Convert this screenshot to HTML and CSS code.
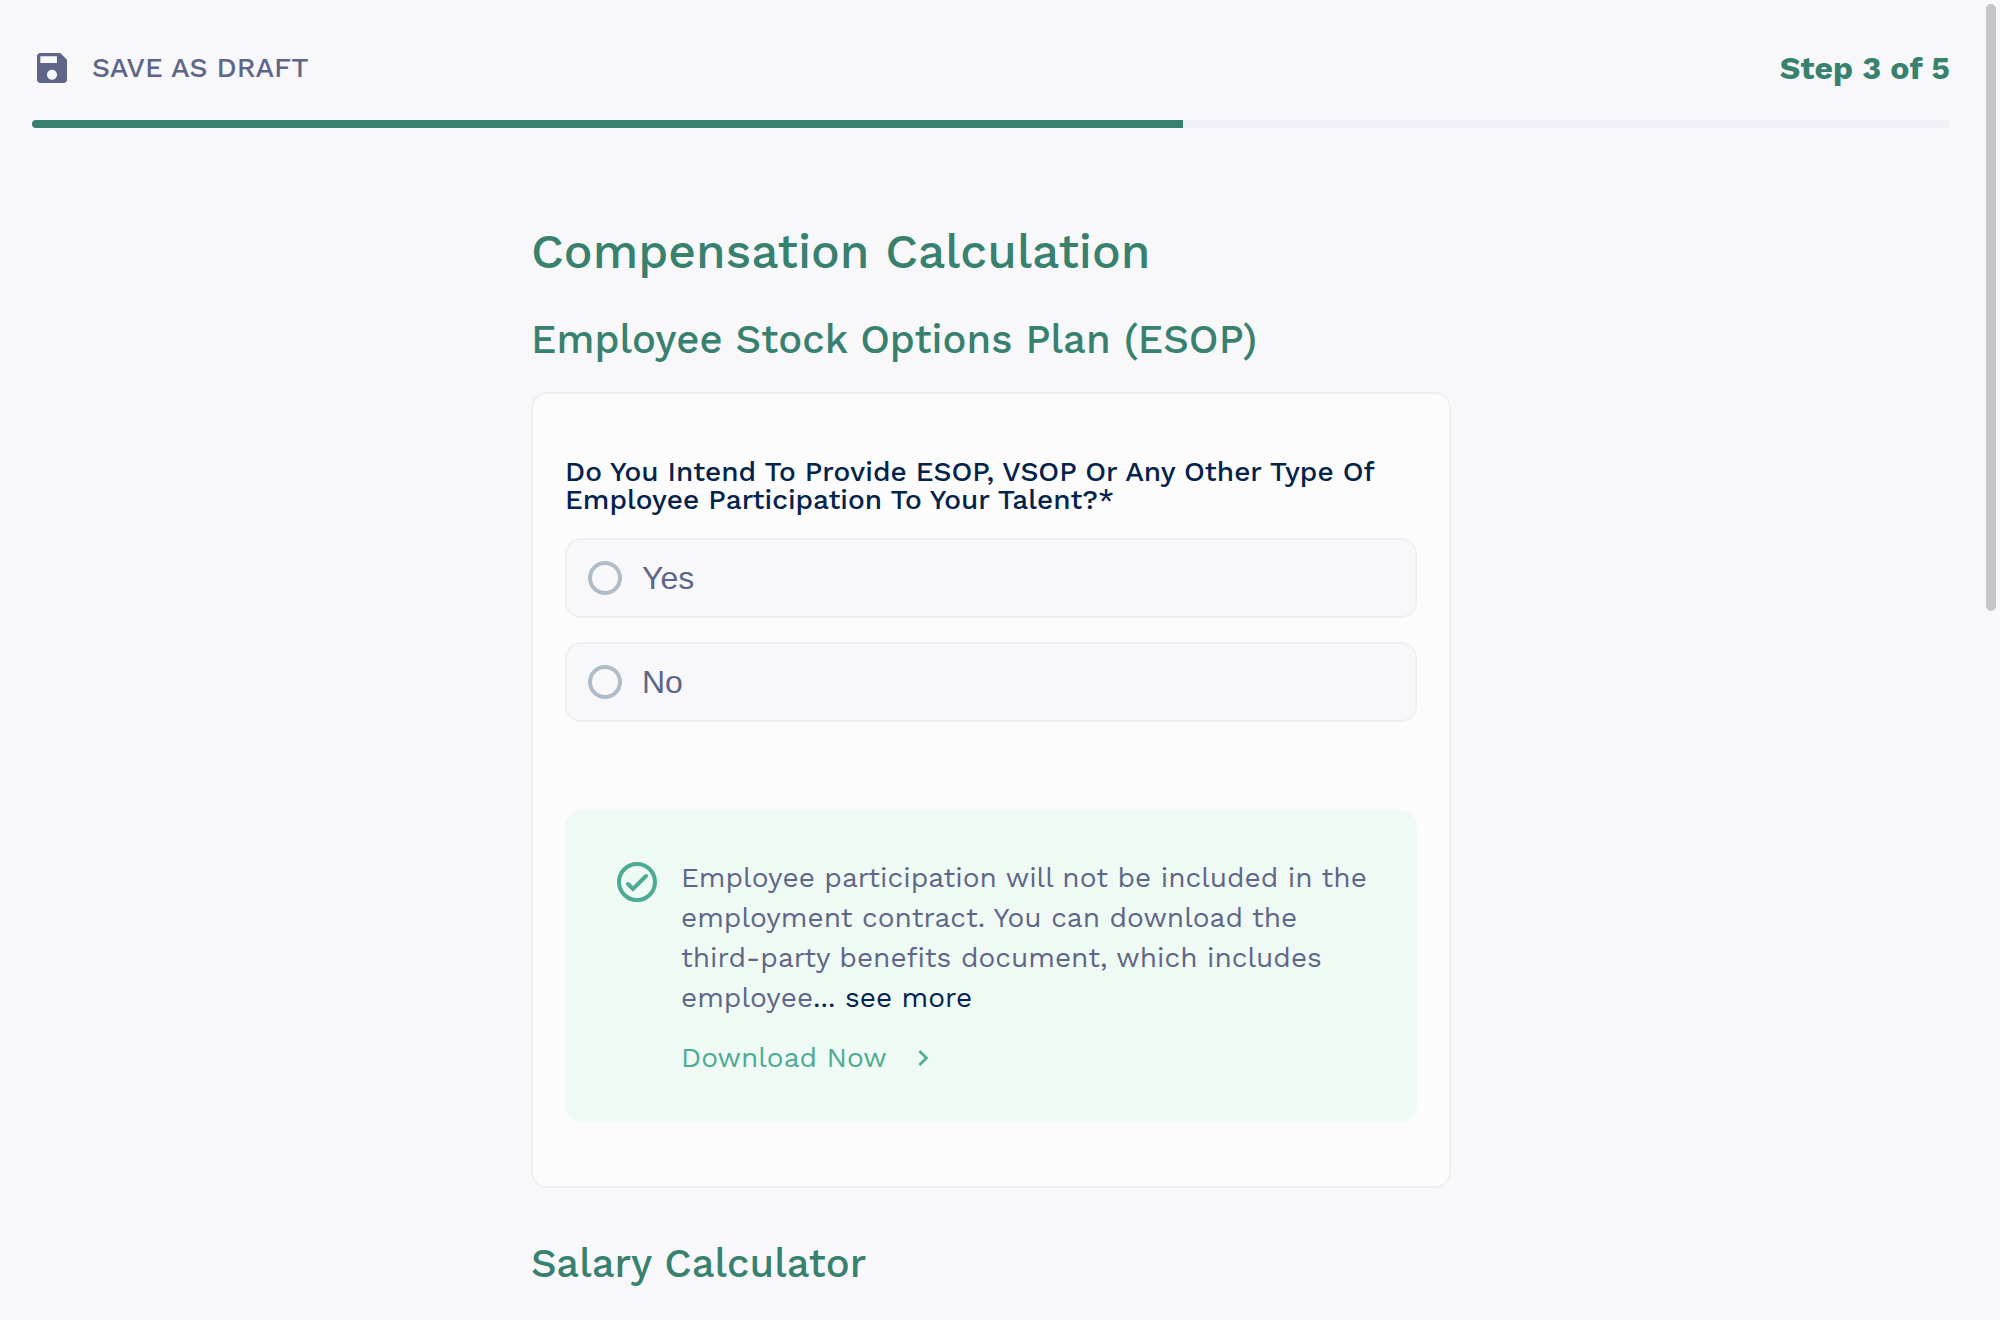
FILE: index.html
```html
<!DOCTYPE html>
<html lang="en">
<head>
<meta charset="utf-8">
<meta name="viewport" content="width=device-width, initial-scale=1">
<title>Compensation Calculation</title>
<link rel="stylesheet" href="styles.css">
</head>
<body>
<div class="page">
  <header class="topbar">
    <div class="topbar-row">
      <button class="save" type="button">
        <svg class="save-icon" viewBox="0 0 24 24" aria-hidden="true"><path fill="currentColor" d="M17 3H5c-1.11 0-2 .9-2 2v14c0 1.1.89 2 2 2h14c1.1 0 2-.9 2-2V7l-4-4zm-5 16c-1.66 0-3-1.34-3-3s1.34-3 3-3 3 1.34 3 3-1.34 3-3 3zm3-10H5V5h10v4z"/></svg>
        <span>SAVE AS DRAFT</span>
      </button>
      <span class="step" id="step">Step 3 of 5</span>
    </div>
    <progress class="progress" max="5" value="3" aria-labelledby="step"></progress>
  </header>

  <main class="content">
    <h1 class="title">Compensation Calculation</h1>
    <h2 class="subtitle">Employee Stock Options Plan (ESOP)</h2>
    <section class="card">
      <div class="choices" role="radiogroup" aria-labelledby="question">
        <p class="question" id="question">Do You Intend To Provide ESOP, VSOP Or Any Other Type Of Employee Participation To Your Talent?*</p>
        <label class="option"><input class="radio" type="radio" name="esop" value="yes"><span>Yes</span></label>
        <label class="option"><input class="radio" type="radio" name="esop" value="no"><span>No</span></label>
      </div>
      <div class="notice">
        <svg class="notice-icon" viewBox="0 0 48 48" fill="none" stroke="currentColor" stroke-width="4" aria-hidden="true"><circle cx="24" cy="24" r="18"/><path stroke-linecap="round" d="M15 26l5 5 13-13"/></svg>
        <div class="notice-body">
          <p class="notice-text">Employee participation will not be included in the employment contract. You can download the third-party benefits document, which includes employee<button class="more" type="button">... see more</button></p>
          <a class="download" href="#download"><span>Download Now</span>
            <svg class="chevron" viewBox="0 0 24 24" aria-hidden="true"><path fill="currentColor" d="M10 6L8.59 7.41 13.17 12l-4.58 4.59L10 18l6-6z"/></svg>
          </a>
        </div>
      </div>
    </section>
    <h2 class="subtitle subtitle-next">Salary Calculator</h2>
  </main>
</div>
<div class="scroll-thumb" aria-hidden="true"></div>
</body>
</html>
```
FILE: styles.css
```css
:root {
  --green: #37816e;
  --mint: #4dab93;
  --slate: #5e6687;
  --navy: #03234b;
  --line: #efeff5;
  --surface: #f8f8fb;
}
* { box-sizing: border-box; margin: 0; padding: 0; }
html { overflow: hidden; background: var(--surface); }
body {
  font-family: "Work Sans", Inter, "Liberation Sans", sans-serif;
  font-size: 28px;
  line-height: 40px;
  color: var(--slate);
}
button { border: 0; background: none; font: inherit; color: inherit; cursor: pointer; }
.page { padding: 48px 50px 0 32px; }
.topbar-row { display: flex; justify-content: space-between; align-items: center; }
.save { display: flex; align-items: center; gap: 20px; font-weight: 500; }
.save-icon { width: 40px; height: 40px; }
.step { color: var(--green); font-size: 32px; font-weight: 700; }
.progress {
  display: block;
  width: 100%;
  height: 8px;
  margin-top: 32px;
  border: 0;
  border-radius: 4px;
  overflow: hidden;
  background: var(--line);
  appearance: none;
}
.progress::-webkit-progress-bar { background: var(--line); }
.progress::-webkit-progress-value { background: var(--green); }
.content { max-width: 920px; margin: 0 auto; padding-top: 92px; }
.title, .subtitle { color: var(--green); font-weight: 500; }
.title { font-size: 48px; line-height: 64px; }
.subtitle { margin-top: 32px; font-size: 40px; line-height: 48px; }
.subtitle-next { margin-top: 52px; }
.card {
  margin-top: 28px;
  padding: 64px 32px;
  border: 2px solid var(--line);
  border-radius: 16px;
  background: #fcfcfc;
}
.choices { display: grid; gap: 24px; }
.question { color: var(--navy); line-height: 28px; font-weight: 500; }
.option {
  display: flex;
  align-items: center;
  gap: 20px;
  height: 80px;
  padding: 0 21px;
  border: 2px solid var(--line);
  border-radius: 16px;
  background: var(--surface);
  font-family: Helvetica, "Liberation Sans", sans-serif;
  font-size: 32px;
}
.radio { width: 34px; height: 34px; border: 4px solid #b0bcc8; border-radius: 50%; appearance: none; }
.radio:checked { border: 10px solid var(--green); }
.notice {
  display: flex;
  gap: 20px;
  margin-top: 88px;
  padding: 48px 48px 44px;
  border-radius: 16px;
  background: #effaf4;
}
.notice-icon { flex: none; width: 48px; height: 48px; color: var(--mint); }
.more { color: var(--navy); }
.download { display: flex; align-items: center; gap: 20px; margin-top: 20px; color: var(--mint); text-decoration: none; }
.chevron { width: 32px; height: 32px; }
.scroll-thumb {
  position: fixed;
  top: 4px;
  right: 4px;
  width: 10px;
  height: 46vh;
  border-radius: 5px;
  background: #c5c5c7;
}
```
